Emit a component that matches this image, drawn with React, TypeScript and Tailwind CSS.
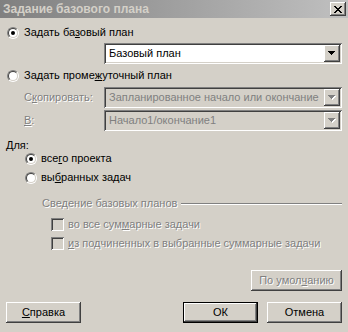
import React from 'react';

const dis = 'text-[#808080] [text-shadow:1px_1px_0_#ffffff]';
const sunken =
  'shadow-[inset_1px_1px_0_#808080,inset_-1px_-1px_0_#ffffff,inset_2px_2px_0_#404040,inset_-2px_-2px_0_#d4d0c8]';
const raised =
  'shadow-[inset_-1px_-1px_0_#404040,inset_1px_1px_0_#ffffff,inset_-2px_-2px_0_#808080,inset_2px_2px_0_#d4d0c8]';

const M = ({ children }: { children: React.ReactNode }) => (
  <span className="underline underline-offset-[1px] decoration-1">{children}</span>
);

const Radio = ({ checked }: { checked?: boolean }) => (
  <span className="w-[12px] h-[12px] rounded-full border border-t-[#808080] border-l-[#808080] border-b-white border-r-white flex shrink-0">
    <span className="w-[10px] h-[10px] rounded-full border border-t-[#404040] border-l-[#404040] border-b-[#d4d0c8] border-r-[#d4d0c8] bg-white flex items-center justify-center">
      {checked && <span className="w-[4px] h-[4px] rounded-full bg-black" />}
    </span>
  </span>
);

const Check = () => <span className={`w-[13px] h-[13px] shrink-0 bg-[#d4d0c8] ${sunken}`} />;

const Arrow = ({ disabled }: { disabled?: boolean }) => (
  <svg width="8" height="5" viewBox="0 0 8 5" shapeRendering="crispEdges">
    {disabled && <path d="M1 1h7L4.5 5z" fill="#ffffff" />}
    <path d="M0 0h7L3.5 4z" fill={disabled ? '#808080' : '#000000'} />
  </svg>
);

const Combo = ({ text, disabled }: { text: string; disabled?: boolean }) => (
  <div className={`w-[238px] h-[21px] p-[2px] flex ${sunken} ${disabled ? 'bg-[#d4d0c8]' : 'bg-white'}`}>
    <div className={`flex-1 flex items-center pl-[3px] ${disabled ? 'text-[#808080]' : 'text-black'}`}>{text}</div>
    <div className={`w-[16px] h-[17px] bg-[#d4d0c8] flex items-center justify-center ${raised}`}>
      <Arrow disabled={disabled} />
    </div>
  </div>
);

const Btn = ({
  children,
  isDefault,
  disabled,
  w = 'w-[75px]',
}: {
  children: React.ReactNode;
  isDefault?: boolean;
  disabled?: boolean;
  w?: string;
}) =>
  isDefault ? (
    <div className={`${w} h-[21px] border border-black flex`}>
      <div className={`flex-1 flex items-center justify-center bg-[#d4d0c8] ${raised}`}>{children}</div>
    </div>
  ) : (
    <div className={`${w} h-[21px] flex items-center justify-center bg-[#d4d0c8] ${raised} ${disabled ? dis : ''}`}>
      {children}
    </div>
  );

export default function App() {
  return (
    <div className="w-[348px] h-[332px] bg-[#d4d0c8] text-black text-[11px] leading-[13px] font-['Liberation_Sans',Arial,sans-serif] flex flex-col overflow-hidden select-none">
      <div className="h-[18px] shrink-0 flex items-center justify-between pl-[3px] pr-[2px] bg-linear-to-r from-[#808080] to-[#c0c0c0]">
        <span className="font-bold text-[12px] text-[#d4d0c8]">Задание базового плана</span>
        <div className={`w-[16px] h-[14px] bg-[#d4d0c8] flex items-center justify-center ${raised}`}>
          <svg width="8" height="7" viewBox="0 0 8 7" shapeRendering="crispEdges" fill="#000">
            <path d="M0 0h2v1H0zM6 0h2v1H6zM1 1h2v1H1zM5 1h2v1H5zM2 2h4v1H2zM3 3h2v1H3zM2 4h4v1H2zM1 5h2v1H1zM5 5h2v1H5zM0 6h2v1H0zM6 6h2v1H6z" />
          </svg>
        </div>
      </div>

      <div className="mt-[8px] h-[13px] ml-[7px] flex items-center gap-[5px]">
        <Radio checked />
        <span>
          Задать ба<M>з</M>овый план
        </span>
      </div>

      <div className="mt-[4px] ml-[104px]">
        <Combo text="Базовый план" />
      </div>

      <div className="mt-[5px] h-[13px] ml-[7px] flex items-center gap-[5px]">
        <Radio />
        <span>
          Задать проме<M>ж</M>уточный план
        </span>
      </div>

      <div className="mt-[5px] flex items-center">
        <span className={`w-[104px] pl-[24px] ${dis}`}>
          С<M>к</M>опировать:
        </span>
        <Combo text="Запланированное начало или окончание" disabled />
      </div>

      <div className="mt-[2px] flex items-center">
        <span className={`w-[104px] pl-[24px] ${dis}`}>
          <M>В</M>:
        </span>
        <Combo text="Начало1/окончание1" disabled />
      </div>

      <div className="mt-[8px] h-[13px] pl-[6px] flex items-center">Для:</div>

      <div className="h-[13px] ml-[25px] flex items-center gap-[4px]">
        <Radio checked />
        <span>
          все<M>г</M>о проекта
        </span>
      </div>

      <div className="mt-[6px] h-[13px] ml-[25px] flex items-center gap-[4px]">
        <Radio />
        <span>
          вы<M>б</M>ранных задач
        </span>
      </div>

      <div className="mt-[13px] h-[13px] ml-[42px] mr-[6px] flex items-center">
        <span className={dis}>Сведение базовых планов</span>
        <span className="flex-1 ml-[4px] h-[2px] border-t border-t-[#808080] border-b border-b-white" />
      </div>

      <div className="mt-[8px] h-[13px] ml-[51px] flex items-center gap-[4px]">
        <Check />
        <span className={dis}>
          во все сум<M>м</M>арные задачи
        </span>
      </div>

      <div className="mt-[6px] h-[13px] ml-[51px] flex items-center gap-[4px]">
        <Check />
        <span className={dis}>
          <M>и</M>з подчиненных в выбранные суммарные задачи
        </span>
      </div>

      <div className="mt-[20px] flex justify-end pr-[6px]">
        <Btn disabled w="w-[91px]">
          По умол<M>ч</M>анию
        </Btn>
      </div>

      <div className="mt-[11px] flex items-center px-[6px]">
        <Btn>
          <M>С</M>правка
        </Btn>
        <div className="flex-1" />
        <Btn isDefault>ОК</Btn>
        <div className="w-[9px]" />
        <Btn>Отмена</Btn>
      </div>
    </div>
  );
}
